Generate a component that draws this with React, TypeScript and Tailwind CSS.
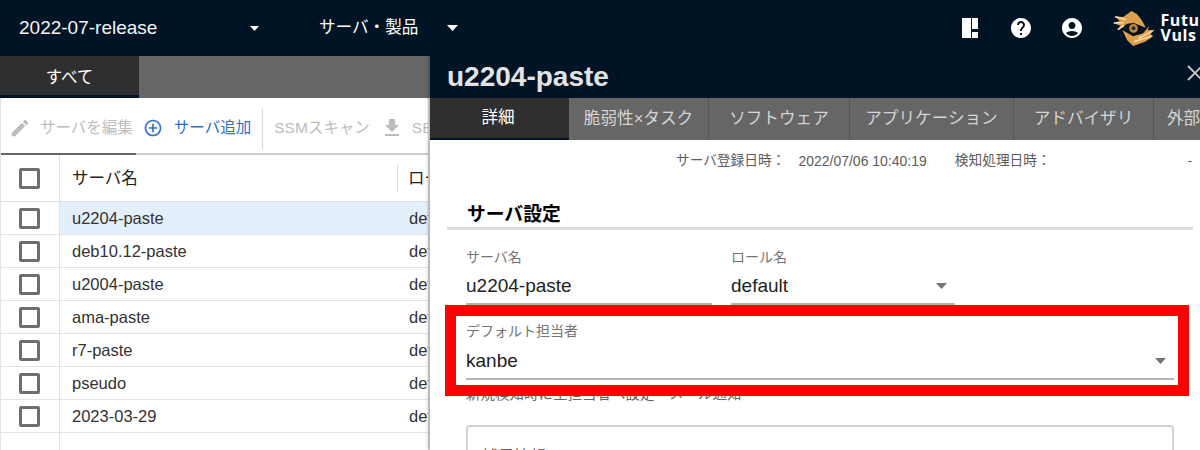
const FONT = "font-['Liberation_Sans','Noto_Sans_CJK_JP',sans-serif]";

const rows = ["u2204-paste", "deb10.12-paste", "u2004-paste", "ama-paste", "r7-paste", "pseudo", "2023-03-29"];
const tabs = [
  { label: "脆弱性×タスク", w: "w-[140px]" },
  { label: "ソフトウェア", w: "w-[141px]" },
  { label: "アプリケーション", w: "w-[164px]" },
  { label: "アドバイザリ", w: "w-[140px]" },
  { label: "外部", w: "w-[60px]" },
];

function Caret({ className }: { className: string }) {
  return (
    <svg viewBox="0 0 11 6" preserveAspectRatio="none" className={className}>
      <path d="M0 0h11L5.5 6z" fill="currentColor" />
    </svg>
  );
}

function Box() {
  return <span className="block h-[21px] w-[21px] rounded-[2px] border-[3px] border-[#6e6e6e] bg-white" />;
}

function EyeLogo() {
  return (
    <svg viewBox="0 0 125 105" className="h-[35px] w-[42px] shrink-0">
      <path d="M55 0 L72 10 L86 28 L98 50 L62 36 L34 46 L12 58 L22 44 L0 36 L20 30 L4 16 L30 18 Z" fill="#dfa04e" />
      <path d="M28 58 L60 76 L90 66 L108 46 L104 58 L125 56 L112 68 L120 76 L96 92 L60 105 L42 88 Z" fill="#dfa04e" />
      <path d="M6 17 L38 26 M2 36 L32 35 M14 56 L32 44" stroke="#f6e2bd" strokeWidth="4" />
      <path d="M62 92 L114 76 M76 82 L118 60" stroke="#f6e2bd" strokeWidth="4" />
      <path d="M32 46 C44 32 72 30 92 64 C76 76 50 74 32 46z" fill="#0b1116" />
      <circle cx="61" cy="52" r="13" fill="#c98836" />
      <circle cx="61" cy="52" r="6" fill="#17304c" />
    </svg>
  );
}

export default function App() {
  return (
    <div className={`relative h-[450px] w-[1200px] overflow-hidden bg-white ${FONT}`}>
      <header className="flex h-14 items-center overflow-hidden bg-[#011425] text-white">
        <div className="flex w-[280px] shrink-0 items-center pl-[19px]">
          <span className="whitespace-nowrap text-[19px] text-[#f4f4f4]">2022-07-release</span>
          <Caret className="ml-[93px] h-[5px] w-[9px] shrink-0 text-white" />
        </div>
        <div className="ml-[39px] flex shrink-0 items-center">
          <span className="whitespace-nowrap text-[16.6px]">サーバ・製品</span>
          <Caret className="ml-[29px] h-[6px] w-[11px] shrink-0 text-white" />
        </div>
        <div className="ml-[504px] flex shrink-0 items-center">
          <svg viewBox="0 0 16 20" className="h-5 w-4 shrink-0">
            <path d="M0 0h9v20H0zM10 0h6v11h-6zM10 14h6v6h-6z" fill="#fff" />
          </svg>
          <svg viewBox="0 0 24 24" className="ml-[31px] h-6 w-6 shrink-0">
            <path fill="#fff" d="M12 2C6.48 2 2 6.48 2 12s4.48 10 10 10 10-4.48 10-10S17.52 2 12 2zm1 17h-2v-2h2v2zm2.07-7.75-.9.92C13.45 12.9 13 13.5 13 15h-2v-.5c0-1.1.45-2.1 1.17-2.83l1.24-1.26c.37-.36.59-.86.59-1.41 0-1.1-.9-2-2-2s-2 .9-2 2H8c0-2.21 1.79-4 4-4s4 1.79 4 4c0 .88-.36 1.68-.93 2.25z" />
          </svg>
          <svg viewBox="0 0 24 24" className="ml-[27px] h-6 w-6 shrink-0">
            <path fill="#fff" d="M12 2C6.48 2 2 6.48 2 12s4.48 10 10 10 10-4.48 10-10S17.52 2 12 2zm0 4c1.93 0 3.5 1.57 3.5 3.5S13.93 13 12 13s-3.5-1.57-3.5-3.5S10.07 6 12 6zm0 14c-2.03 0-4.43-.82-6.14-2.88C7.55 15.8 9.68 15 12 15s4.45.8 6.14 2.12C16.43 19.18 14.03 20 12 20z" />
          </svg>
          <div className="ml-[29px] flex items-center">
            <EyeLogo />
            <div className="ml-[5px] text-[16px] font-bold leading-[15px] tracking-[0.6px] font-['Open_Sans',sans-serif]">
              <div>Future</div>
              <div>Vuls</div>
            </div>
          </div>
        </div>
      </header>

      {/* server list behind the drawer */}
      <div className="h-[394px] w-[430px] bg-[#dcdcdc]">
        <div className="flex h-[42px] bg-[#666666]">
          <div className="flex h-[42px] w-[139px] items-center justify-center border-b-[3px] border-[#011425] bg-[#2f2f2f] pt-[3px] text-[16.5px] text-white">
            すべて
          </div>
        </div>
        <div className="h-[352px] w-[428px] overflow-hidden rounded-t-[3px] border-l border-[#e4e4e4] bg-white">
          <div className="flex h-[55px] items-center overflow-hidden pt-[5px] text-[15.5px] text-[#bdbdbd]">
            <svg viewBox="0 0 24 24" className="ml-[8px] h-[22px] w-[22px] shrink-0">
              <path fill="#bdbdbd" d="M3 17.25V21h3.75L17.81 9.94l-3.75-3.75L3 17.25zM20.71 7.04a1 1 0 0 0 0-1.41l-2.34-2.34a1 1 0 0 0-1.41 0l-1.83 1.83 3.75 3.75 1.83-1.83z" />
            </svg>
            <span className="ml-[9px] whitespace-nowrap">サーバを編集</span>
            <svg viewBox="0 0 24 24" className="ml-[10px] h-[20px] w-[20px] shrink-0">
              <path fill="#2d6fd0" d="M13 7h-2v4H7v2h4v4h2v-4h4v-2h-4V7zm-1-5C6.48 2 2 6.48 2 12s4.48 10 10 10 10-4.48 10-10S17.52 2 12 2zm0 18c-4.41 0-8-3.59-8-8s3.59-8 8-8 8 3.59 8 8-3.59 8-8 8z" />
            </svg>
            <span className="ml-[11px] whitespace-nowrap text-[#2d6fd0]">サーバ追加</span>
            <span className="ml-[11px] h-[41px] w-px shrink-0 bg-[#d8d8d8]" />
            <span className="ml-[11px] whitespace-nowrap">SSMスキャン</span>
            <svg viewBox="0 0 24 24" className="ml-[10px] h-6 w-6 shrink-0">
              <path fill="#bdbdbd" d="M19 9h-4V3H9v6H5l7 7 7-7zM5 18v2h14v-2H5z" />
            </svg>
            <span className="ml-[8px] whitespace-nowrap">SBOM</span>
          </div>
          <div className="flex h-[2px]">
            <div className="w-[135px] bg-[#666666]" />
            <div className="flex-1 bg-[#cccccc]" />
          </div>
          <div className="flex h-[47px] border-b border-[#e0e0e0]">
            <div className="flex w-[59px] shrink-0 items-center justify-center border-r border-[#e0e0e0] pr-[2px]">
              <Box />
            </div>
            <div className="flex flex-1 items-center pl-[12px] pt-[1px] text-[16.5px] text-[#212121]">サーバ名</div>
            <div className="my-[9px] w-px bg-[#e0e0e0]" />
            <div className="flex w-[30px] items-center overflow-hidden whitespace-nowrap pl-[10px] pt-[1px] text-[16.5px] text-[#212121]">ロール名</div>
          </div>
          {rows.map((name, i) => (
            <div key={name} className="flex h-[33px] border-b border-[#e4e4e4] text-[16.5px] text-[#333333]">
              <div className="flex w-[59px] shrink-0 items-center justify-center border-r border-[#e0e0e0] pr-[2px]">
                <Box />
              </div>
              <div className={`flex flex-1 items-center pt-[1px] ${i === 0 ? "bg-[#e3f0fb]" : ""}`}>
                <span className="pl-[12px]">{name}</span>
                <span className="ml-auto w-[19px] overflow-hidden whitespace-nowrap">default</span>
              </div>
            </div>
          ))}
          <div className="ml-[58px] h-[20px] border-l border-[#e0e0e0]" />
        </div>
      </div>

      {/* detail drawer */}
      <aside className="absolute left-[430px] top-14 h-[394px] w-[770px] overflow-hidden bg-white shadow-[-2px_0_3px_rgba(0,0,0,0.2)]">
        <div className="flex h-[42px] items-center justify-between bg-[#011425]">
          <h1 className="pl-[17px] text-[28px] font-bold leading-none text-[#e3e3e3]">u2204-paste</h1>
          <svg viewBox="0 0 16 16" className="mb-[8px] mr-[-3px] h-4 w-4 shrink-0">
            <path d="M1 1l14 14M15 1L1 15" stroke="#c9c9c9" strokeWidth="1.8" />
          </svg>
        </div>
        <div className="flex h-[42px] text-[16.6px]">
          <div className="flex h-full w-[139px] shrink-0 items-center justify-center border-b-[2px] border-[#011425] bg-[#2f2f2f] pr-[3px] text-white">詳細</div>
          {tabs.map((t) => (
            <div key={t.label} className={`flex h-full ${t.w} shrink-0 items-center justify-center whitespace-nowrap border-r border-[#555555] bg-[#666666] text-[#d4d4d4]`}>
              {t.label}
            </div>
          ))}
        </div>
        <div className="flex h-[42px] items-center text-[13.7px] text-[#5c5c5c]">
          <span className="ml-[246px] whitespace-nowrap">サーバ登録日時：</span>
          <span className="ml-[13px] whitespace-nowrap text-[14px]">2022/07/06 10:40:19</span>
          <span className="ml-[28px] whitespace-nowrap">検知処理日時：</span>
          <span className="ml-[137px]">-</span>
        </div>
        <div className="ml-[17px] mr-[7px] mt-[18px] h-[27px] pl-[20px] pt-[1px] text-[18.8px] font-bold leading-[27px] text-black">サーバ設定</div>
        <div className="ml-[17px] mr-[7px] h-[3px] bg-[#dcdcdc]" />

        <div className="ml-[36px] mr-[26px] mt-[20px] flex gap-[19px]">
          <div className="w-[246px]">
            <div className="text-[14px] leading-[15px] text-[#757575]">サーバ名</div>
            <div className="mt-[8px] h-[26px] text-[19px] leading-[26px] text-[#222222]">u2204-paste</div>
            <div className="mt-[4px] h-[2px] bg-[#b4b4b4]" />
          </div>
          <div className="w-[224px]">
            <div className="text-[14px] leading-[15px] text-[#757575]">ロール名</div>
            <div className="mt-[8px] flex h-[26px] items-center justify-between text-[19px] text-[#222222]">
              <span>default</span>
              <Caret className="mr-[8px] h-[6px] w-[11px] text-[#757575]" />
            </div>
            <div className="mt-[4px] h-[2px] bg-[#b4b4b4]" />
          </div>
        </div>

        <div className="ml-[36px] mr-[26px] mt-[19px]">
          <div className="text-[14px] leading-[15px] text-[#757575]">デフォルト担当者</div>
          <div className="mt-[9px] flex h-[26px] items-center justify-between text-[19px] text-[#222222]">
            <span>kanbe</span>
            <Caret className="mr-[8px] h-[6px] w-[11px] text-[#757575]" />
          </div>
          <div className="mt-[4px] h-[2px] bg-[#b4b4b4]" />
          <div className="mt-[6px] text-[14.5px] leading-[17px] text-[#666666]">新規検知時に主担当者へ設定・メール通知</div>
          <div className="mt-[22px] h-[60px] w-[708px] rounded-t-[4px] border-[2px] border-[#d4d4d4] px-[14px] pt-[18px] text-[16px] text-[#666666]">補足情報</div>
        </div>
      </aside>

      {/* red highlight annotation */}
      <div className="pointer-events-none absolute left-[445px] top-[305px] h-[91px] w-[744px] border-[11px] border-[#ff0000]" />
    </div>
  );
}
